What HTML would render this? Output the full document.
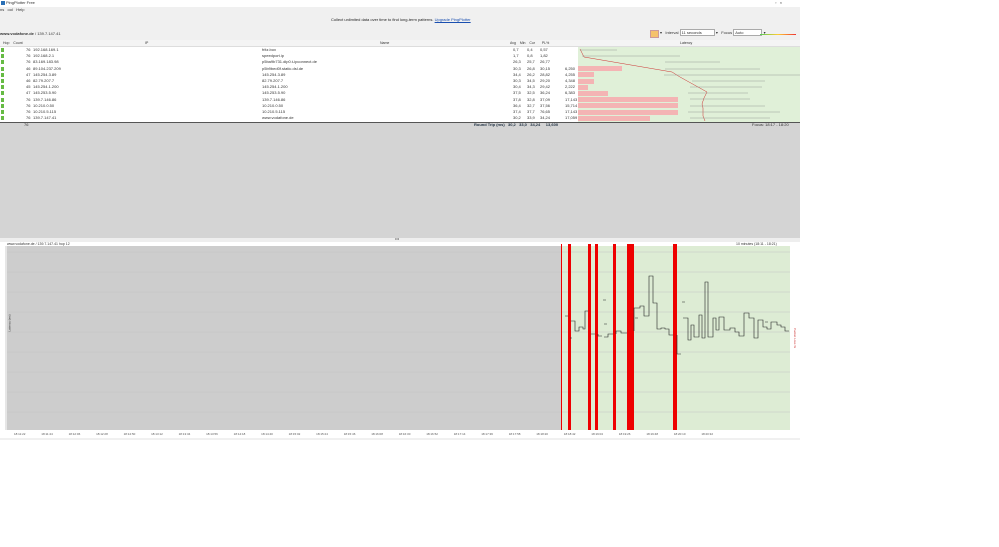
<!DOCTYPE html>
<html><head><meta charset="utf-8"><style>
body{margin:0;width:999px;height:547px;background:#fff;position:relative;overflow:hidden;font-family:"Liberation Sans",sans-serif;}
.a{position:absolute;}
.t{position:absolute;font-size:4px;color:#333;white-space:nowrap;line-height:6px}
</style></head><body>
<div class="a" style="left:0;top:0;width:800px;height:440px;background:#f0f0f0"></div>
<div class="a" style="left:0;top:0;width:800px;height:7px;background:#fff"></div>
<div class="a" style="left:1px;top:1px;width:4px;height:4px;background:#2a6fb5"></div>
<div class="t" style="left:6px;top:0">PingPlotter Free</div>
<div class="t" style="left:775px;top:0">▫ &nbsp; ×</div>
<div class="t" style="left:0;top:7px">ns &nbsp; ool &nbsp; Help</div>
<div class="t" style="left:331px;top:17px;color:#222">Collect unlimited data over time to find long-term patterns. <span style="color:#1a4fb0;text-decoration:underline">Upgrade PingPlotter</span></div>
<div class="t" style="left:0;top:31px;font-weight:bold;color:#333">www.vodafone.de <span style="font-weight:normal">/ 139.7.147.41</span></div>
<div class="a" style="left:650px;top:30px;width:7px;height:6px;background:#f5c26b;border:1px solid #c99"></div>
<div class="t" style="left:660px;top:30px">▾ &nbsp; Interval <span style="background:#fff;border:1px solid #aaa;padding:0 12px 0 1px">11 seconds</span> ▾ &nbsp; Focus <span style="background:#fff;border:1px solid #aaa;padding:0 18px 0 1px">Auto</span> ▾</div>
<div class="a" style="left:760px;top:34px;width:36px;height:1px;background:linear-gradient(90deg,#5c5,#fc3,#e33)"></div>
<!-- table -->
<div class="a" style="left:0;top:40px;width:800px;height:6px;background:#f4f4f4;border-bottom:1px solid #ddd"></div>
<div class="t" style="left:3px;top:40px;font-size:3.5px">Hop &nbsp;&nbsp; Count</div>
<div class="t" style="left:145px;top:40px;font-size:3.5px">IP</div>
<div class="t" style="left:380px;top:40px;font-size:3.5px">Name</div>
<div class="t" style="left:510px;top:40px;font-size:3.5px">Avg &nbsp;&nbsp; Min &nbsp;&nbsp; Cur &nbsp;&nbsp;&nbsp;&nbsp;&nbsp; PL%</div>
<div class="t" style="left:680px;top:40px;font-size:3.5px">Latency</div>
<div class="a" style="left:0;top:47px;width:578px;height:75px;background:#fff"></div>
<div class="a" style="left:578px;top:47px;width:222px;height:75px;background:#e0f0d8"></div>
<div id="rows"></div>
<div class="a" style="left:0;top:122px;width:800px;height:1px;background:#555"></div>
<div class="a" style="left:0;top:123px;width:800px;height:115px;background:#d4d4d4"></div>
<div class="t" style="left:24px;top:122px">76</div>
<div class="t" style="left:474px;top:122px;font-weight:bold;color:#234">Round Trip (ms) &nbsp; 30,2 &nbsp; 33,0 &nbsp; 34,24 &nbsp;&nbsp;&nbsp; 13,600</div>
<div class="t" style="left:752px;top:122px">Focus: 18:17 - 18:20</div>
<div class="a" style="left:0;top:238px;width:800px;height:4px;background:#eee"></div>
<div class="t" style="left:395px;top:236px">•••</div>
<div class="a" style="left:0;top:242px;width:800px;height:196px;background:#fff"></div>
<div class="t" style="left:7px;top:241px;font-size:3.5px">www.vodafone.de / 139.7.147.41 hop 12</div>
<div class="t" style="left:736px;top:241px;font-size:3.5px">10 minutes (18:11 - 18:21)</div>
<div class="a" style="left:7px;top:246px;width:554px;height:184px;background:#cdcdcd"></div>
<div class="a" style="left:561px;top:246px;width:229px;height:184px;background:#ddecd4"></div>
<svg class="a" style="left:0;top:0" width="800" height="440">
<g stroke="#c4c4c4" stroke-width="0.5">
<line x1="7" y1="252" x2="790" y2="252"/><line x1="7" y1="272" x2="790" y2="272"/><line x1="7" y1="292" x2="790" y2="292"/><line x1="7" y1="312" x2="790" y2="312"/><line x1="7" y1="332" x2="790" y2="332"/><line x1="7" y1="352" x2="790" y2="352"/><line x1="7" y1="372" x2="790" y2="372"/><line x1="7" y1="392" x2="790" y2="392"/><line x1="7" y1="412" x2="790" y2="412"/></g>
<g fill="#e00">
<rect x="561" y="244" width="1" height="186"/><rect x="568" y="244" width="3" height="186"/><rect x="588" y="244" width="3" height="186"/><rect x="595" y="244" width="3" height="186"/><rect x="613" y="244" width="3" height="186"/><rect x="627" y="244" width="7" height="186"/><rect x="673" y="244" width="4" height="186"/></g>
<path fill="none" stroke="#222" stroke-width="0.6" d="M571 321H575V331H579V327H583V329H585V311H588M591 334H595M598 334V336H602M604 337H608V334H613M616 334V331H621V333H627M634 331V308H640V306H644V316H649V276H653V303H657V329H661V328H665V329H669V335H673M677 335V354H681M683 318H688V340H691V325H694V337H699V315H702V338H705V282H708V337H713V318H716V330H719V317H724V330H730V328H735V332H739V336H744V313H749V318H754V338H758V320H763V327H767V329H771V322H777V325H781V327H785V331H789"/>
<path stroke="#222" stroke-width="0.6" d="M565 316h3M603 300h3M604 324h3M635 318h3M682 302h3M765 322h3M570 338h2"/>
<line x1="6" y1="246" x2="6" y2="430" stroke="#999" stroke-width="0.5"/>
<path fill="none" stroke="#c33" stroke-width="0.5" d="M580 49L584 57L672 72L680 77L707 92L704 98L702 104L703 108L703 112L703 116L705 121"/>
<g stroke="#888" stroke-width="0.4"><line x1="580" y1="50" x2="617" y2="50"/><line x1="582" y1="56" x2="680" y2="56"/><line x1="665" y1="62" x2="720" y2="62"/><line x1="665" y1="69" x2="760" y2="69"/><line x1="664" y1="75" x2="800" y2="75"/><line x1="692" y1="81" x2="765" y2="81"/><line x1="690" y1="87" x2="762" y2="87"/><line x1="688" y1="93" x2="748" y2="93"/><line x1="690" y1="99" x2="750" y2="99"/><line x1="690" y1="106" x2="765" y2="106"/><line x1="688" y1="112" x2="780" y2="112"/><line x1="690" y1="118" x2="770" y2="118"/></g>
</svg>
<div class="t" style="left:1px;top:320px;font-size:3px;transform:rotate(-90deg)">Latency (ms)</div>
<div class="t" style="left:785px;top:335px;font-size:3px;color:#c33;transform:rotate(90deg)">Packet Loss %</div>
<div class="t" style="left:14px;top:431px;font-size:3px;word-spacing:15px;color:#555">18:11:22 18:11:44 18:12:06 18:12:28 18:12:50 18:13:12 18:13:34 18:13:56 18:14:18 18:14:40 18:15:02 18:15:24 18:15:46 18:16:08 18:16:30 18:16:52 18:17:14 18:17:36 18:17:58 18:18:20 18:18:42 18:19:04 18:19:26 18:19:48 18:20:10 18:20:32</div>
<script>
var d=[["76","192.168.169.1","fritz.box","0,7","0,4","0,57","",0],["76","192.168.2.1","speedport.ip","1,7","0,8","1,82","",0],["76","83.169.183.98","p5ba9b731.dip0.t-ipconnect.de","26,3","25,7","26,77","",0],["46","89.104.237.209","p5b9bed0f.static.dsl.de","30,3","26,8","30,15","6,250",44],["47","145.254.3.89","145.254.3.89","34,4","26,2","28,82","4,255",16],["46","82.79.207.7","82.79.207.7","30,3","34,5","29,20","4,348",16],["45","145.254.1.200","145.254.1.200","30,4","34,3","29,42","2,222",10],["47","145.253.5.90","145.253.5.90","37,5","32,5","36,24","6,383",30],["76","139.7.146.86","139.7.146.86","37,8","32,8","37,09","17,143",100],["76","10.210.0.50","10.210.0.50","36,4","32,7","37,56","15,714",100],["76","10.210.5.115","10.210.5.115","37,4","37,7","76,65","17,143",100],["76","139.7.147.41","www.vodafone.de","30,2","33,9","34,24","17,059",72]];
var h="";d.forEach(function(r,i){var y=47+i*6.2;
h+='<div class="a" style="left:1px;top:'+(y+1)+'px;width:3px;height:4px;background:#6b4"></div>';
h+='<div class="t" style="left:26px;top:'+y+'px">'+r[0]+'</div><div class="t" style="left:33px;top:'+y+'px">'+r[1]+'</div><div class="t" style="left:262px;top:'+y+'px">'+r[2]+'</div><div class="t" style="left:513px;top:'+y+'px">'+r[3]+'</div><div class="t" style="left:527px;top:'+y+'px">'+r[4]+'</div><div class="t" style="left:540px;top:'+y+'px">'+r[5]+'</div><div class="t" style="left:565px;top:'+y+'px">'+r[6]+'</div>';
if(r[7])h+='<div class="a" style="left:578px;top:'+(y+0.5)+'px;width:'+r[7]+'px;height:5px;background:#f4b4b4"></div>';});
document.getElementById("rows").innerHTML=h;
</script>
</body></html>
